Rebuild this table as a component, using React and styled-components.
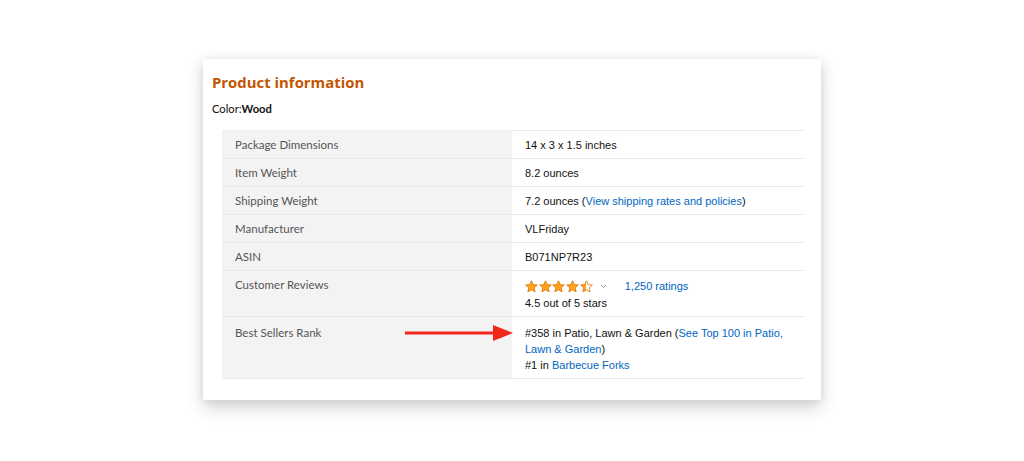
import React from "react";
import styled, { createGlobalStyle } from "styled-components";

const GlobalStyle = createGlobalStyle`
  html, body {
    margin: 0;
    padding: 0;
    background: #fff;
  }
`;

const Page = styled.div`
  width: 1024px;
  height: 461px;
  display: flex;
  justify-content: center;
  align-items: flex-start;
  padding-top: 59px;
  box-sizing: border-box;
  background: #fff;
`;

const Card = styled.div`
  width: 618px;
  height: 341px;
  box-sizing: border-box;
  background: #fff;
  padding: 13px 17px 0 9px;
  box-shadow: 0 8px 16px rgba(0, 0, 0, 0.17), 0 0 9px rgba(0, 0, 0, 0.08);
  font-family: Lato, "Liberation Sans", sans-serif;
`;

const Title = styled.h2`
  margin: 0;
  font-family: "Open Sans", sans-serif;
  font-weight: 700;
  font-size: 14.9px;
  line-height: 20px;
  color: #c45500;
`;

const ColorLine = styled.div`
  margin-top: 10px;
  font-size: 11.2px;
  line-height: 14px;
  color: #111;
  b {
    font-weight: 700;
  }
`;

const Table = styled.div`
  margin: 14px 0 0 10px;
  display: grid;
  grid-template-columns: 290px 1fr;
  border-top: 1px solid #ececec;
`;

const Label = styled.div`
  position: relative;
  background: #f3f3f3;
  border-bottom: 1px solid #e7e7e7;
  padding: ${(p) => p.$pt || 6}px 13px 5px;
  min-height: ${(p) => p.$h || 16}px;
  font-family: Lato, sans-serif;
  font-size: 11.5px;
  line-height: 16px;
  color: #555;
`;

const Value = styled.div`
  border-bottom: 1px solid #e7e7e7;
  padding: ${(p) => p.$pt || 6}px 13px 5px;
  min-height: ${(p) => p.$h || 16}px;
  font-family: "Liberation Sans", Arial, sans-serif;
  font-size: 11px;
  line-height: 16px;
  color: #111;
`;

const Link = styled.a`
  color: #0066c0;
  text-decoration: none;
`;

const StarRow = styled.div`
  display: flex;
  align-items: center;
  height: 18px;
`;

const Stars = styled.div`
  display: flex;
  gap: 0.7px;
`;

const Chevron = styled.span`
  display: inline-flex;
  margin-left: 7px;
  margin-right: 18px;
`;

const Arrow = styled.svg`
  position: absolute;
  left: 183px;
  top: 7px;
`;

const STAR =
  "M6.5 0.8 L8.2 4.6 L12.3 5 L9.2 7.8 L10.1 11.9 L6.5 9.8 L2.9 11.9 L3.8 7.8 L0.7 5 L4.8 4.6 Z";

function Star({ half }) {
  const id = "halfstar";
  return (
    <svg width="13" height="13" viewBox="0 0 13 13">
      {half && (
        <defs>
          <linearGradient id={id} x1="0" x2="1" y1="0" y2="0">
            <stop offset="50%" stopColor="#ffa41c" />
            <stop offset="50%" stopColor="#fff" />
          </linearGradient>
        </defs>
      )}
      <path
        d={STAR}
        fill={half ? `url(#${id})` : "#ffa41c"}
        stroke="#e47911"
        strokeWidth="0.9"
        strokeLinejoin="round"
      />
    </svg>
  );
}

const rows = [
  ["Package Dimensions", "14 x 3 x 1.5 inches"],
  ["Item Weight", "8.2 ounces"],
  [
    "Shipping Weight",
    <>
      7.2 ounces (<Link>View shipping rates and policies</Link>)
    </>,
  ],
  ["Manufacturer", "VLFriday"],
  ["ASIN", "B071NP7R23"],
];

export default function App() {
  return (
    <>
      <GlobalStyle />
      <Page>
        <Card>
          <Title>Product information</Title>
          <ColorLine>
            Color:<b>Wood</b>
          </ColorLine>
          <Table>
            {rows.map(([k, v]) => (
              <React.Fragment key={k}>
                <Label>{k}</Label>
                <Value>{v}</Value>
              </React.Fragment>
            ))}
            <Label $h={34}>Customer Reviews</Label>
            <Value $h={34}>
              <StarRow>
                <Stars>
                  <Star />
                  <Star />
                  <Star />
                  <Star />
                  <Star half />
                </Stars>
                <Chevron>
                  <svg width="7" height="5" viewBox="0 0 7 5">
                    <polyline
                      points="1,1 3.5,3.5 6,1"
                      fill="none"
                      stroke="#999"
                      strokeWidth="1"
                    />
                  </svg>
                </Chevron>
                <Link>1,250 ratings</Link>
              </StarRow>
              <div>4.5 out of 5 stars</div>
            </Value>
            <Label $pt={8} $h={48}>
              Best Sellers Rank
              <Arrow width="110" height="18" viewBox="0 0 110 18">
                <rect x="0" y="7.5" width="92" height="3" fill="#f2261b" />
                <polygon points="88,1 108,9 88,17" fill="#f2261b" />
              </Arrow>
            </Label>
            <Value $pt={8} $h={48}>
              #358 in Patio, Lawn &amp; Garden (<Link>See Top 100 in Patio,</Link>
              <br />
              <Link>Lawn &amp; Garden</Link>)
              <br />
              #1 in <Link>Barbecue Forks</Link>
            </Value>
          </Table>
        </Card>
      </Page>
    </>
  );
}
